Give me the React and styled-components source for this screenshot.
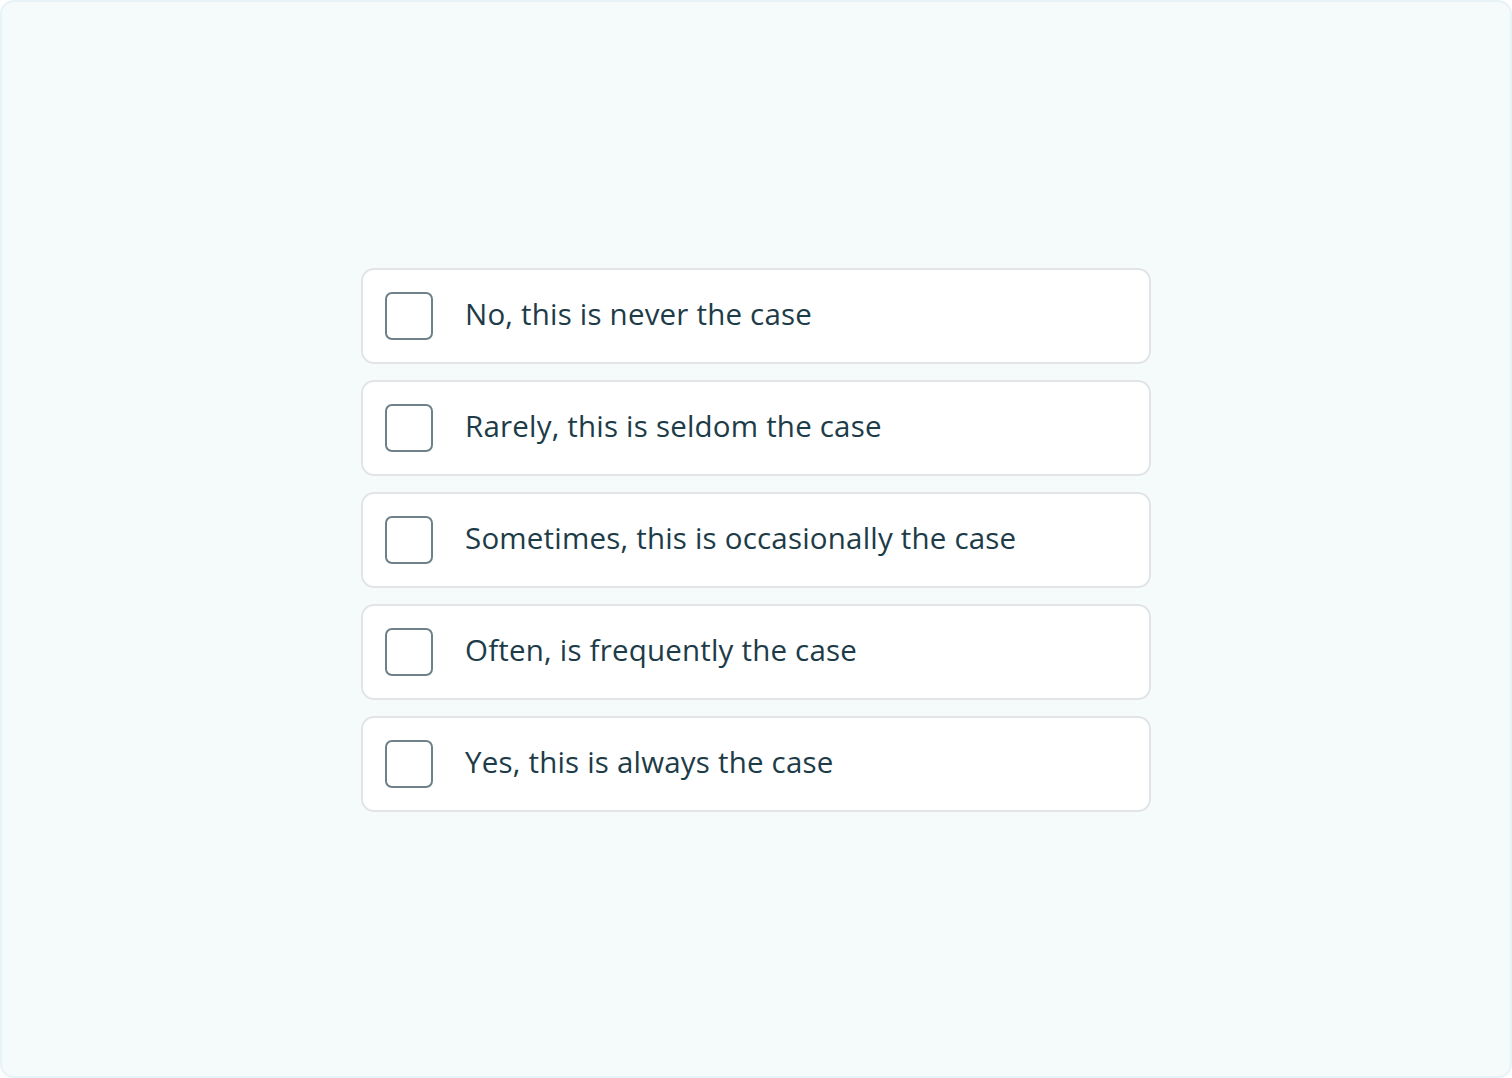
import styled, { createGlobalStyle } from "styled-components"

const GlobalStyle = createGlobalStyle`
    * { box-sizing: border-box; }
    html, body { margin: 0; padding: 0; }
    body {
        background: #ffffff;
        font-family: "Open Sans", "Liberation Sans", sans-serif;
    }
`

const options = [
    "No, this is never the case",
    "Rarely, this is seldom the case",
    "Sometimes, this is occasionally the case",
    "Often, is frequently the case",
    "Yes, this is always the case",
]

export default function App() {
    return (
        <>
            <GlobalStyle />
            <Frame>
                <OptionList>
                    {options.map(text => (
                        <Option key={text}>
                            <Box type="checkbox" />
                            <Label>{text}</Label>
                        </Option>
                    ))}
                </OptionList>
            </Frame>
        </>
    )
}

const Frame = styled.div`
    width: 1512px;
    height: 1078px;
    display: flex;
    align-items: center;
    justify-content: center;
    background: #f5fafb;
    border: 2px solid #e7f3f7;
    border-radius: 14px;
`

const OptionList = styled.div`
    display: flex;
    flex-direction: column;
    gap: 16px;
    width: 790px;
    margin-top: 2px;
`

const Option = styled.label`
    display: flex;
    align-items: center;
    gap: 32px;
    height: 96px;
    padding: 0 22px;
    background: #ffffff;
    border: 2px solid #e1e5e7;
    border-radius: 13px;
    cursor: pointer;
`

const Box = styled.input`
    appearance: none;
    margin: 0;
    flex: none;
    width: 48px;
    height: 48px;
    border: 2px solid #6f8088;
    border-radius: 7px;
    background: #ffffff;
    cursor: pointer;
`

const Label = styled.span`
    font-size: 29.5px;
    font-weight: 500;
    letter-spacing: 0.2px;
    color: #1d3c48;
    margin-top: -6px;
`
